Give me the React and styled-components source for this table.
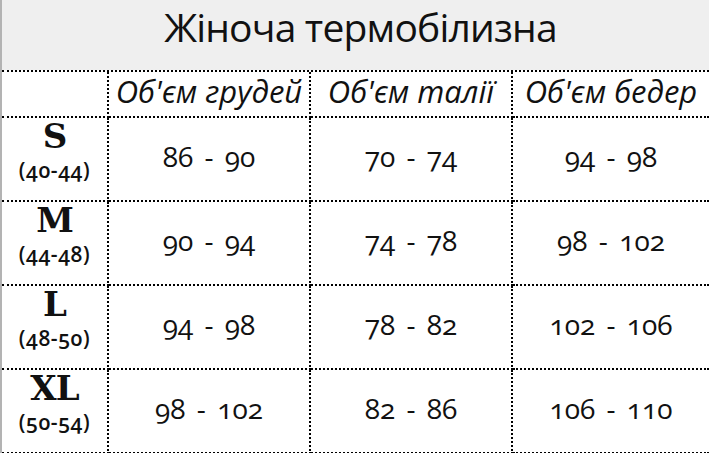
import React from "react";
import styled, { createGlobalStyle } from "styled-components";

const GlobalStyle = createGlobalStyle`
  html, body { margin: 0; padding: 0; background: #ffffff; }
  body { font-family: "Open Sans", "Noto Sans", sans-serif; color: #111111; }
`;

const Page = styled.div`
  width: 709px;
  height: 453px;
  overflow: hidden;
  box-sizing: border-box;
  border-left: 2px solid #b3b3b3;
  display: flex;
  flex-direction: column;
`;

const TitleBar = styled.div`
  height: 70px;
  flex: none;
  background: #efefef;
  display: flex;
  align-items: center;
  justify-content: center;
  padding: 0 0 16px 10px;
  box-sizing: border-box;
`;

const Title = styled.h1`
  margin: 0;
  font-family: "Open Sans", "Noto Sans", sans-serif;
  font-weight: 400;
  font-size: 39px;
  line-height: 40px;
  letter-spacing: -0.8px;
  color: #111111;
  white-space: nowrap;
`;

const Table = styled.div`
  display: grid;
  grid-template-columns: 107px 202px 202px 1fr;
  grid-template-rows: 46px repeat(4, 84px);
  border-top: 2px dotted #000000;
`;

const Cell = styled.div`
  box-sizing: border-box;
  border-bottom: 2px dotted #000000;
  border-right: ${(p) => (p.$last ? "none" : "2px dotted #000000")};
  display: flex;
  flex-direction: column;
  align-items: center;
  justify-content: center;
  min-width: 0;
`;

const HeadCell = styled(Cell)`
  padding-bottom: 5px;
  font-family: "Open Sans", "Noto Sans", sans-serif;
  font-style: italic;
  font-weight: 400;
  font-size: 31px;
  line-height: 31px;
  white-space: nowrap;
`;

const SizeCell = styled(Cell)`
  justify-content: flex-start;
  padding-top: 1px;
  gap: 5px;
`;

const SizeName = styled.span`
  display: block;
  font-family: "DejaVu Serif", "Liberation Serif", serif;
  font-weight: 700;
  font-size: 34px;
  line-height: 34px;
  letter-spacing: -1px;
`;

const SizeRange = styled.span`
  display: block;
  font-family: "Open Sans", "Noto Sans", sans-serif;
  font-weight: 600;
  font-size: 21px;
  line-height: 25px;
  letter-spacing: 0.6px;
  font-variant-numeric: oldstyle-nums;
`;

const ValueCell = styled(Cell)`
  padding-bottom: 6px;
  font-family: "Open Sans", "Noto Sans", sans-serif;
  font-weight: 500;
  font-size: 28px;
  line-height: 28px;
  word-spacing: 4px;
  font-variant-numeric: oldstyle-nums;
  white-space: nowrap;
`;

const headers = ["Об'єм грудей", "Об'єм талії", "Об'єм бедер"];

const rows = [
  { size: "S", range: "(40-44)", values: ["86 - 90", "70 - 74", "94 - 98"] },
  { size: "M", range: "(44-48)", values: ["90 - 94", "74 - 78", "98 - 102"] },
  { size: "L", range: "(48-50)", values: ["94 - 98", "78 - 82", "102 - 106"] },
  { size: "XL", range: "(50-54)", values: ["98 - 102", "82 - 86", "106 - 110"] },
];

export default function App() {
  return (
    <Page>
      <GlobalStyle />
      <TitleBar>
        <Title>Жіноча термобілизна</Title>
      </TitleBar>
      <Table>
        <Cell />
        {headers.map((h, i) => (
          <HeadCell key={h} $last={i === headers.length - 1}>
            {h}
          </HeadCell>
        ))}
        {rows.map((r) => (
          <React.Fragment key={r.size}>
            <SizeCell>
              <SizeName>{r.size}</SizeName>
              <SizeRange>{r.range}</SizeRange>
            </SizeCell>
            {r.values.map((v, i) => (
              <ValueCell key={i} $last={i === r.values.length - 1}>
                {v}
              </ValueCell>
            ))}
          </React.Fragment>
        ))}
      </Table>
    </Page>
  );
}
